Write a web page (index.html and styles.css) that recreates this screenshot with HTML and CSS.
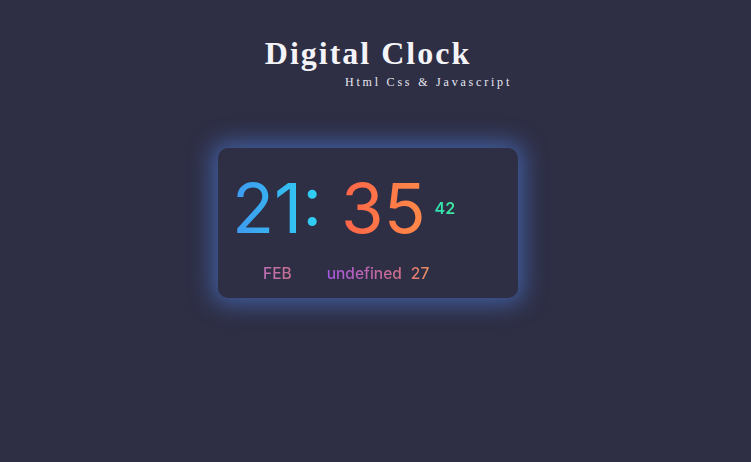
FILE: index.html
```html
<!DOCTYPE html>
<html>
<head>
<meta charset="utf-8">
<link rel="stylesheet" href="styles.css">
</head>
<body>
<header class="head">
  <h1 class="title">Digital Clock</h1>
  <p class="subtitle">Html Css &amp; Javascript</p>
</header>
<main class="stage">
  <div class="card">
    <div class="time">
      <span class="hours">21:</span>
      <span class="minutes">35</span>
      <span class="seconds">42</span>
    </div>
    <div class="date">
      <span class="month">FEB</span>
      <span class="day">undefined</span>
      <span class="num">27</span>
    </div>
  </div>
</main>
</body>
</html>
```
FILE: styles.css
```css
html, body {
  margin: 0;
  padding: 0;
  background: #2e2f45;
  height: 100%;
}
body {
  font-family: "Inter", "Noto Sans", sans-serif;
}
.head {
  display: flex;
  flex-direction: column;
  align-items: center;
  padding-top: 34px;
}
.title {
  margin: 0 15px 0 0;
  font-family: "Liberation Serif", serif;
  font-weight: bold;
  font-size: 32px;
  letter-spacing: 2px;
  color: #f4f4f8;
  line-height: 38px;
}
.subtitle {
  margin: 3px 0 0 0;
  font-family: "Liberation Serif", serif;
  font-size: 12px;
  letter-spacing: 2.8px;
  color: #e6e8f2;
  padding-left: 106px;
  line-height: 14px;
}
.stage {
  display: flex;
  justify-content: flex-start;
  padding-left: 218px;
  padding-top: 59px;
}
.card {
  width: 300px;
  height: 150px;
  box-sizing: border-box;
  background: #2e2e44;
  border-radius: 10px;
  box-shadow: 0 0 22px 6px rgba(80, 130, 230, 0.55);
  padding: 26px 0 0 14px;
}
.time {
  display: flex;
  align-items: flex-start;
  font-weight: 400;
  line-height: 1;
}
.hours, .minutes {
  font-size: 69px;
  -webkit-background-clip: text;
  background-clip: text;
  color: transparent;
}
.hours {
  background-image: linear-gradient(90deg, #3f98f0, #2fd2f3);
}
.minutes {
  margin-left: 19px;
  background-image: linear-gradient(90deg, #ff6448, #ff8a48);
}
.seconds {
  font-size: 16px;
  font-weight: 600;
  margin-left: 9px;
  margin-top: 26px;
  background-image: linear-gradient(90deg, #2fe0b0, #40e8a0);
  -webkit-background-clip: text;
  background-clip: text;
  color: transparent;
}
.date {
  display: flex;
  margin-top: 21px;
  padding-left: 31px;
  font-size: 15.5px;
  font-weight: 500;
  line-height: 20px;
}
.date span {
  -webkit-background-clip: text;
  background-clip: text;
  color: transparent;
}
.month {
  background-image: linear-gradient(90deg, #c070b8, #c87090);
}
.day {
  margin-left: 35px;
  background-image: linear-gradient(90deg, #a858e0, #d07088);
}
.num {
  margin-left: 9px;
  background-image: linear-gradient(90deg, #e07878, #e89060);
}
```
